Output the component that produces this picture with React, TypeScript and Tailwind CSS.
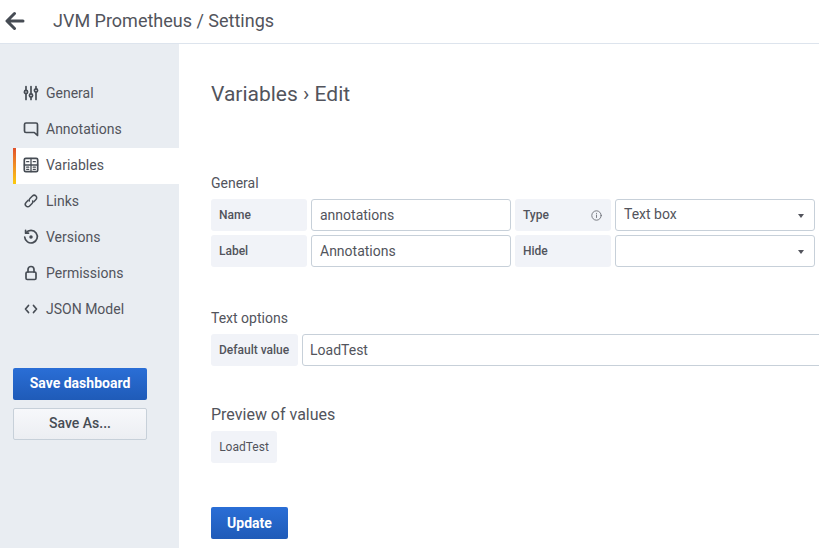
import { ReactNode } from "react";

const font = { fontFamily: "Roboto, sans-serif" };

const stroke = {
  fill: "none",
  stroke: "currentColor",
  strokeWidth: 1.7,
  strokeLinecap: "round" as const,
  strokeLinejoin: "round" as const,
};

function SlidersIcon() {
  return (
    <svg width="16" height="16" viewBox="0 0 16 16" {...stroke}>
      <path d="M3 1.500v3.500M3 9v5.500M8 1.500v7M8 12.500v2M13 1.500v2M13 7.500v7" />
      <circle cx="3" cy="7" r="1.600" />
      <circle cx="8" cy="10.500" r="1.600" />
      <circle cx="13" cy="5.500" r="1.600" />
    </svg>
  );
}

function CommentIcon() {
  return (
    <svg width="16" height="16" viewBox="0 0 16 16" {...stroke}>
      <path d="M3 2h10a1.500 1.500 0 0 1 1.500 1.500v11l-3.200-3H3A1.500 1.500 0 0 1 1.500 10V3.500A1.500 1.500 0 0 1 3 2z" />
    </svg>
  );
}

function CalculatorIcon() {
  return (
    <svg width="16" height="16" viewBox="0 0 16 16" {...stroke}>
      <rect x="1.300" y="1.300" width="13.400" height="13.400" rx="1.500" />
      <path d="M8 1.300v13.400M1.300 8h13.400" strokeWidth={1.300} />
      <path d="M3.600 4.700h2.200M10.200 4.700h2.200M10.200 10.200h2.200M10.200 12.300h2.200M3.600 10.200h2.200M3.600 12.300h2.200" strokeWidth={1.200} />
    </svg>
  );
}

function LinkIcon() {
  return (
    <svg width="16" height="16" viewBox="0 0 16 16" {...stroke} strokeWidth={1.500}>
      <g transform="rotate(-45 8 8)">
        <path d="M6.500 5.500h-3a2.500 2.500 0 0 0 0 5H7a2.500 2.500 0 0 0 2.200-1.300" />
        <path d="M9.500 10.500h3a2.500 2.500 0 0 0 0-5H9a2.500 2.500 0 0 0-2.200 1.300" />
      </g>
    </svg>
  );
}

function HistoryIcon() {
  return (
    <svg width="16" height="16" viewBox="0 0 16 16" {...stroke}>
      <path d="M3 3.800A6.300 6.300 0 1 1 1.700 8" />
      <path d="M2.600 1.300v2.900h2.900" />
      <circle cx="8" cy="8" r="0.900" fill="currentColor" />
    </svg>
  );
}

function LockIcon() {
  return (
    <svg width="16" height="16" viewBox="0 0 16 16" {...stroke}>
      <rect x="3" y="7" width="10" height="7.500" rx="1.300" />
      <path d="M5 7V4.500a3 3 0 0 1 6 0V7" />
    </svg>
  );
}

function CodeIcon() {
  return (
    <svg width="16" height="16" viewBox="0 0 16 16" {...stroke}>
      <path d="M5.500 4.500 2.500 8l3 3.500M10.500 4.500 13.500 8l-3 3.500" />
    </svg>
  );
}

function InfoIcon() {
  return (
    <svg width="11" height="11" viewBox="0 0 11 11" fill="none" stroke="currentColor" strokeWidth="0.9" strokeLinecap="round">
      <circle cx="5.500" cy="5.500" r="4.700" />
      <path d="M5.500 5v2.500M5.500 3.300v.2" />
    </svg>
  );
}

const navItems = [
  { name: "General", icon: <SlidersIcon /> },
  { name: "Annotations", icon: <CommentIcon /> },
  { name: "Variables", icon: <CalculatorIcon />, active: true },
  { name: "Links", icon: <LinkIcon /> },
  { name: "Versions", icon: <HistoryIcon /> },
  { name: "Permissions", icon: <LockIcon /> },
  { name: "JSON Model", icon: <CodeIcon /> },
];

function FieldLabel({ children, width }: { children: ReactNode; width: string }) {
  return (
    <div
      className={`${width} flex h-8 shrink-0 items-center justify-between rounded-[3px] bg-[#f1f3f8] px-2 text-xs font-medium text-[#52545c]`}
    >
      {children}
    </div>
  );
}

function TextField({ value, width }: { value: string; width: string }) {
  return (
    <div
      className={`${width} flex h-8 shrink-0 items-center rounded-[3px] border border-[#c7d0d9] bg-white px-2 text-sm text-[#52545c]`}
    >
      {value}
    </div>
  );
}

function SelectField({ value }: { value: string }) {
  return (
    <div className="flex h-8 w-[200px] shrink-0 items-center justify-between rounded-[3px] border border-[#c7d0d9] bg-white px-2 text-sm text-[#52545c]">
      <span className="-mt-[2px]">{value}</span>
      <span className="mt-[2px] mr-[2px] h-0 w-0 border-x-[3.500px] border-t-[4px] border-x-transparent border-t-[#52545c]" />
    </div>
  );
}

export default function App() {
  return (
    <div className="flex h-[548px] w-[819px] flex-col overflow-hidden bg-white" style={font}>
      <header className="flex h-11 shrink-0 items-center border-b border-[#dde4ed] pb-px">
        <svg className="ml-[5px] text-[#464c54]" width="20" height="20" viewBox="0 0 20 20" fill="none" stroke="currentColor" strokeWidth="3" strokeLinecap="round" strokeLinejoin="round">
          <path d="M18 10H2.500M9.500 2.500 2 10l7.500 7.500" />
        </svg>
        <h1 className="ml-[28px] text-lg text-[#52545c]">JVM Prometheus / Settings</h1>
      </header>

      <div className="flex min-h-0 flex-1">
        <aside className="w-[179px] shrink-0 bg-[#e9edf2] pt-8 pl-[13px]">
          <nav className="flex flex-col">
            {navItems.map((item) => (
              <div
                key={item.name}
                className={`relative flex h-9 items-center gap-[7px] pb-[2px] pl-[10px] text-sm text-[#52545c] ${
                  item.active ? "bg-white" : ""
                }`}
              >
                {item.active && (
                  <span className="absolute inset-y-0 left-0 w-[3px] bg-gradient-to-b from-[#e0502a] to-[#fbca0a]" />
                )}
                <span className="flex w-4 justify-center text-[#464c54]">{item.icon}</span>
                {item.name}
              </div>
            ))}
          </nav>
          <div className="mt-10 flex w-[134px] flex-col gap-2">
            <button className="h-8 rounded-[2px] bg-gradient-to-b from-[#2a6ed6] to-[#1f5bb8] pb-[2px] text-sm font-bold text-white">
              Save dashboard
            </button>
            <button className="h-8 rounded-[2px] border border-[#c7d0d9] bg-gradient-to-b from-[#f7f8fb] to-[#eceef2] pb-[2px] text-sm font-medium text-[#464c54]">
              Save As...
            </button>
          </div>
        </aside>

        <main className="min-w-0 flex-1 pt-[36px] pl-8">
          <h2 className="h-7 text-[21px] leading-7 font-normal text-[#52545c]">Variables › Edit</h2>

          <p className="mt-[67px] h-4 text-sm leading-4 text-[#52545c]">General</p>
          <div className="mt-2 flex flex-col gap-1">
            <div className="flex gap-1">
              <FieldLabel width="w-24">Name</FieldLabel>
              <TextField value="annotations" width="w-[200px]" />
              <FieldLabel width="w-24">
                Type
                <span className="mr-[1px] text-[#6e7178]">
                  <InfoIcon />
                </span>
              </FieldLabel>
              <SelectField value="Text box" />
            </div>
            <div className="flex gap-1">
              <FieldLabel width="w-24">Label</FieldLabel>
              <TextField value="Annotations" width="w-[200px]" />
              <FieldLabel width="w-24">Hide</FieldLabel>
              <SelectField value="" />
            </div>
          </div>

          <p className="mt-[43px] h-4 text-sm leading-4 text-[#52545c]">Text options</p>
          <div className="mt-2 flex gap-1">
            <FieldLabel width="w-[87px]">Default value</FieldLabel>
            <TextField value="LoadTest" width="w-[540px] !pl-[7px]" />
          </div>

          <p className="mt-10 h-[18px] text-base leading-[18px] text-[#52545c]">Preview of values</p>
          <div className="mt-[7px] flex h-8 w-[66px] items-center justify-center rounded-[3px] bg-[#f1f3f8] text-xs text-[#52545c]">
            LoadTest
          </div>

          <button className="mt-[44px] h-8 w-[77px] rounded-[2px] bg-gradient-to-b from-[#2a6ed6] to-[#1f5bb8] text-sm font-bold text-white">
            Update
          </button>
        </main>
      </div>
    </div>
  );
}
